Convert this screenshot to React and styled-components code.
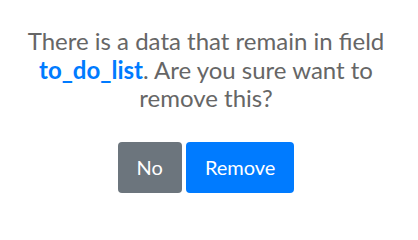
import React from 'react';
import styled, { createGlobalStyle } from 'styled-components';

const GlobalStyle = createGlobalStyle`
  body {
    margin: 0;
    background: #fff;
    font-family: Lato, "Open Sans", sans-serif;
  }
`;

const Dialog = styled.div`
  width: 418px;
  box-sizing: border-box;
  padding: 27px 20px 0 14px;
  display: flex;
  flex-direction: column;
  align-items: center;
`;

const Message = styled.p`
  margin: 0;
  max-width: 370px;
  text-align: center;
  font-size: 24px;
  line-height: 28.5px;
  color: #666;
`;

const Field = styled.strong`
  color: #007bff;
  font-weight: 700;
`;

const Buttons = styled.div`
  margin-top: 29px;
  display: flex;
  gap: 4px;
`;

const Button = styled.button`
  height: 51px;
  padding: 0 19px;
  border: none;
  border-radius: 4px;
  font-family: inherit;
  font-size: 20px;
  color: #fff;
  background: ${(p) => (p.$primary ? '#007bff' : '#6c757d')};
`;

export default function App() {
  return (
    <>
      <GlobalStyle />
      <Dialog role="dialog" aria-modal="true">
        <Message>
          There is a data that remain in field <Field>to_do_list</Field>. Are you sure want to remove this?
        </Message>
        <Buttons>
          <Button>No</Button>
          <Button $primary>Remove</Button>
        </Buttons>
      </Dialog>
    </>
  );
}
